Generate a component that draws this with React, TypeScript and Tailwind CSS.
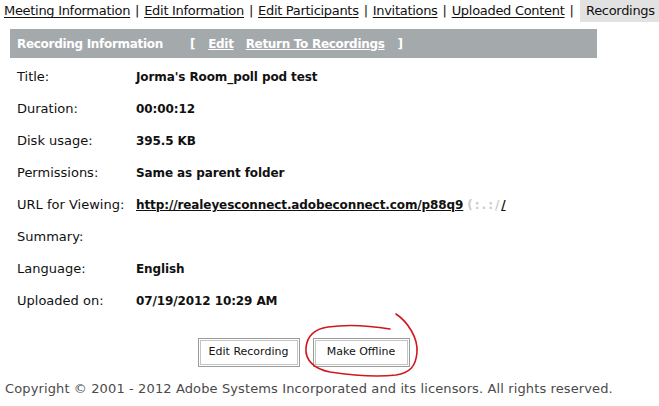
import React from "react";

const rows: { label: string; value: string; link?: boolean }[] = [
  { label: "Title:", value: "Jorma's Room_poll pod test" },
  { label: "Duration:", value: "00:00:12" },
  { label: "Disk usage:", value: "395.5 KB" },
  { label: "Permissions:", value: "Same as parent folder" },
  { label: "URL for Viewing:", value: "http://realeyesconnect.adobeconnect.com/p88q9", link: true },
  { label: "Summary:", value: "" },
  { label: "Language:", value: "English" },
  { label: "Uploaded on:", value: "07/19/2012 10:29 AM" },
];

const tabs = ["Meeting Information", "Edit Information", "Edit Participants", "Invitations", "Uploaded Content"];

function Button({ label, width }: { label: string; width: string }) {
  return (
    <button className={`${width} h-[29px] border border-[#9a9a9a] bg-white p-[1px]`}>
      <span className="flex h-full w-full items-center justify-center border border-[#c4c4c4] text-[11px] text-[#111]">
        {label}
      </span>
    </button>
  );
}

export default function App() {
  return (
    <div className="relative h-[406px] w-[659px] overflow-hidden bg-white font-['DejaVu_Sans',Verdana,sans-serif] text-[#111]">
      <div className="flex h-[22px] items-center pl-[4px] text-[13px] tracking-[-0.3px]">
        {tabs.map((t) => (
          <React.Fragment key={t}>
            <span className="underline underline-offset-[2px]">{t}</span>
            <span className="px-[5px]">|</span>
          </React.Fragment>
        ))}
        <span className="ml-auto flex h-full w-[79px] items-center bg-[#e2e2e2] pl-[6px]">Recordings</span>
      </div>

      <div className="ml-[10px] mt-[7px] flex h-[29px] w-[587px] items-center bg-[#a4a9ac] pl-[7px] text-[12px] font-bold tracking-[-0.3px] text-white">
        <span>Recording Information</span>
        <span className="ml-[27px]">[</span>
        <span className="ml-[13px] underline">Edit</span>
        <span className="ml-[12px] underline">Return To Recordings</span>
        <span className="ml-[13px]">]</span>
      </div>

      <div className="pt-[3px] text-[13px]">
        {rows.map((r) => (
          <div key={r.label} className="flex h-[32px] items-center">
            <span className="w-[136px] pl-[17px]">{r.label}</span>
            {r.link ? (
              <span className="flex items-center text-[12px] font-bold tracking-[-0.1px]">
                <span className="underline">{r.value}</span>
                <span className="ml-[4px] tracking-[2px] text-[#ccc]">(:.:/</span>
                <span className="underline">/</span>
              </span>
            ) : (
              <span className="text-[12px] font-bold tracking-[-0.1px]">{r.value}</span>
            )}
          </div>
        ))}
      </div>

      <div className="mt-[21px] flex w-[607px] justify-center gap-[13px]">
        <Button label="Edit Recording" width="w-[102px]" />
        <Button label="Make Offline" width="w-[97px]" />
      </div>

      <div className="mt-[12px] pl-[5px] text-[13px] tracking-[0.12px] text-[#4a4a4a]">
        Copyright © 2001 - 2012 Adobe Systems Incorporated and its licensors. All rights reserved.
      </div>

      <svg className="pointer-events-none absolute left-0 top-0" width="659" height="406" viewBox="0 0 659 406">
        <path
          d="M396 314 C408 322 418 338 417 352 C416 366 410 373 396 375 C378 377 350 375 330 372 C314 369 305 360 306 348 C307 336 314 329 328 327 C348 324 372 326 390 329"
          fill="none"
          stroke="#d0181c"
          strokeWidth="1.6"
          strokeLinecap="round"
        />
      </svg>
    </div>
  );
}
